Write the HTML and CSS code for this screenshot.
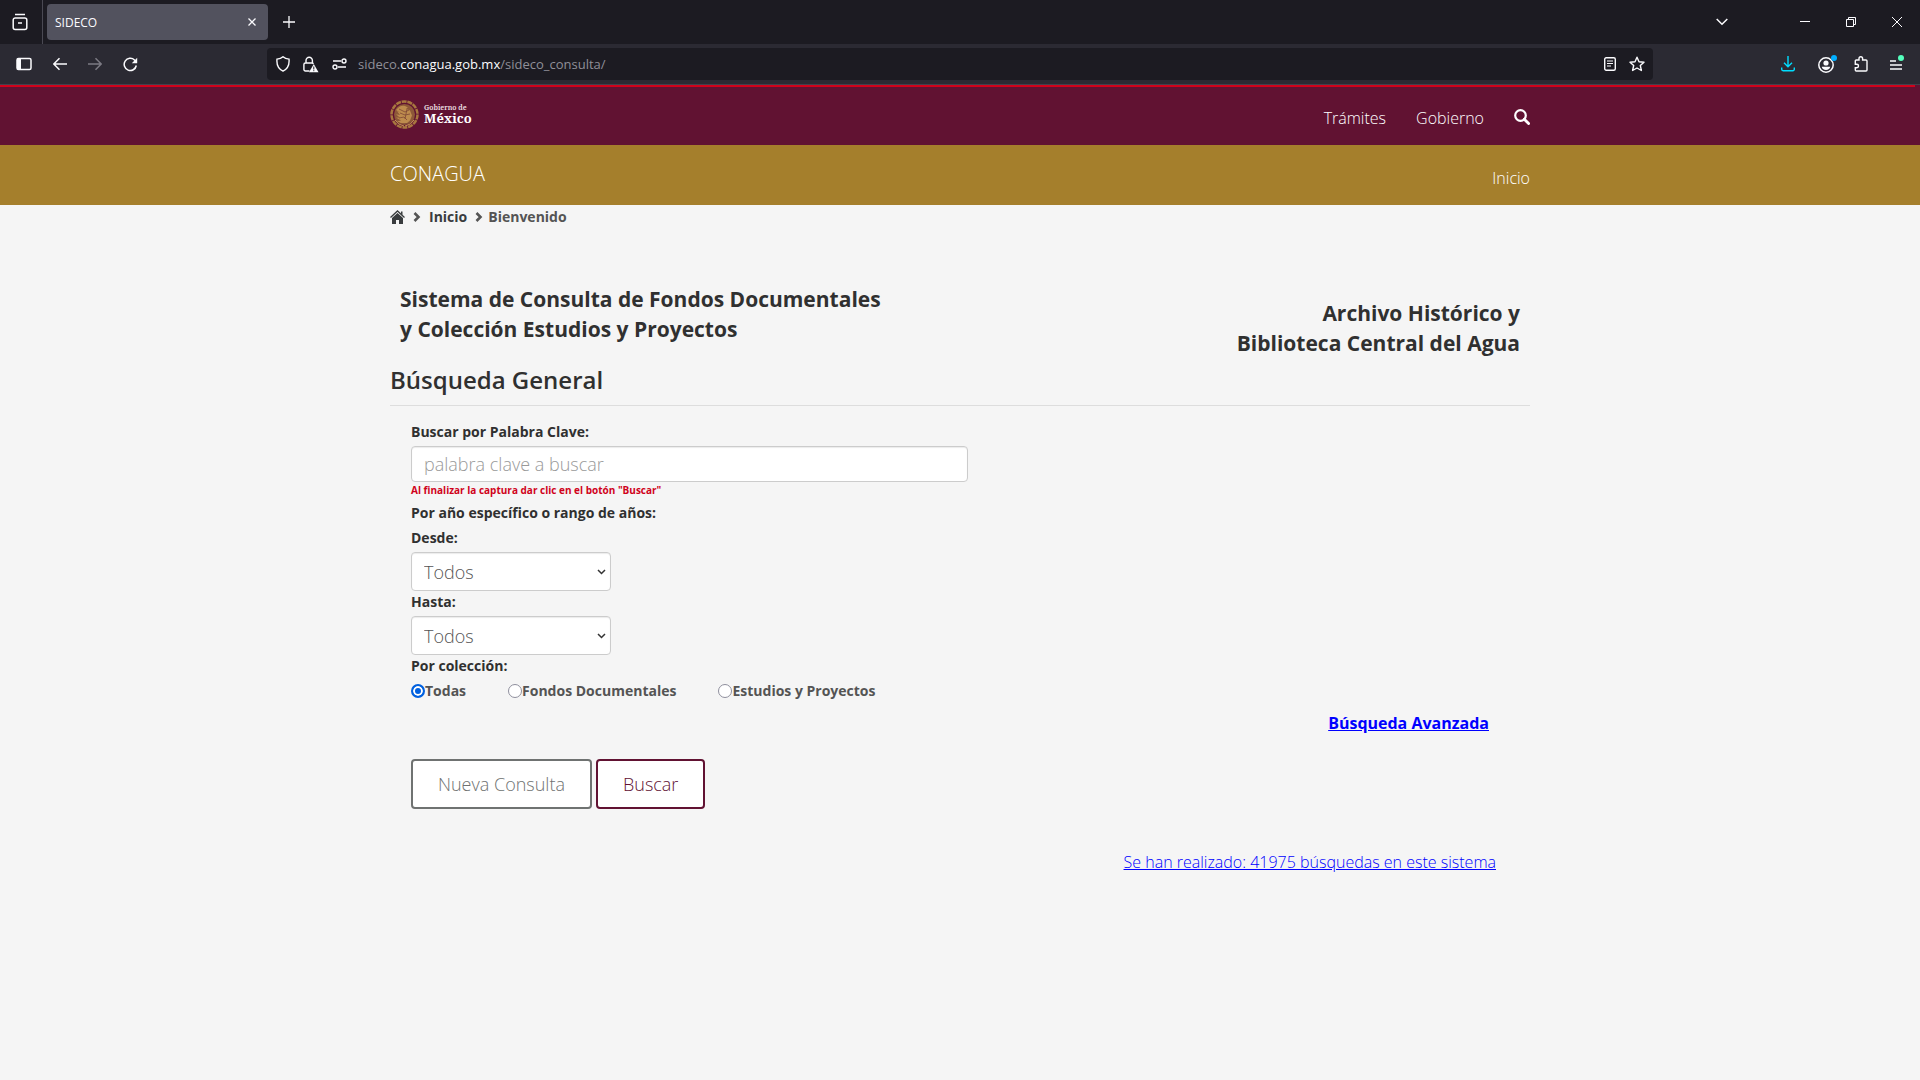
FILE: index.html
```html
<!DOCTYPE html>
<html lang="es">
<head>
<meta charset="utf-8">
<title>SIDECO</title>
<meta name="viewport" content="width=device-width, initial-scale=1">
<link rel="stylesheet" href="styles.css">
</head>
<body>
<div class="browser">
  <div class="tabbar">
    <button class="icon-btn view-btn" aria-label="Firefox View"><svg width="16" height="18" viewBox="0 0 16 18"><path d="M3 1.500h10M3.200 5h9.600a2 2 0 0 1 2 2v7.500a2 2 0 0 1-2 2H3.200a2 2 0 0 1-2-2V7a2 2 0 0 1 2-2zM6 10h4" stroke-width="1.500"/></svg></button>
    <div class="tab"><span>SIDECO</span><button class="icon-btn" aria-label="Cerrar pestaña"><svg width="8" height="8" viewBox="0 0 8 8"><path d="M.5.5l7 7M7.500.5l-7 7" stroke-width="1.300"/></svg></button></div>
    <button class="icon-btn new-tab" aria-label="Nueva pestaña"><svg width="12" height="12" viewBox="0 0 12 12"><path d="M6 0v12M0 6h12" stroke-width="1.300"/></svg></button>
    <div class="window-controls">
      <button class="icon-btn all-tabs" aria-label="Todas las pestañas"><svg width="12" height="8" viewBox="0 0 12 8"><path d="M.7 1L6 6.300 11.300 1" stroke-width="1.500"/></svg></button>
      <button class="icon-btn" aria-label="Minimizar"><svg width="10" height="10" viewBox="0 0 10 10"><path d="M0 4.500h10" stroke-width="1"/></svg></button>
      <button class="icon-btn" aria-label="Restaurar"><svg width="10" height="10" viewBox="0 0 10 10"><path d="M.5 2.500h7v7h-7zM2.500 2.500v-2h7v7h-2" stroke-width="1"/></svg></button>
      <button class="icon-btn" aria-label="Cerrar"><svg width="10" height="10" viewBox="0 0 10 10"><path d="M0 0l10 10M10 0L0 10" stroke-width="1"/></svg></button>
    </div>
  </div>
  <div class="toolbar">
    <div class="nav-buttons">
      <button class="icon-btn" aria-label="Barra lateral"><svg width="16" height="14" viewBox="0 0 16 14"><rect x="1" y="1.500" width="14" height="11" rx="1.500" stroke-width="1.500"/><path d="M1 1.500h4v11H1z" fill="currentColor" stroke="none"/></svg></button>
      <button class="icon-btn" aria-label="Atrás"><svg width="14" height="14" viewBox="0 0 14 14"><path d="M14 7H1M6.500 1.200L.8 7l5.700 5.800" stroke-width="1.500"/></svg></button>
      <button class="icon-btn dim" aria-label="Adelante"><svg width="14" height="14" viewBox="0 0 14 14"><path d="M0 7h13M7.500 1.200L13.200 7l-5.700 5.800" stroke-width="1.500"/></svg></button>
      <button class="icon-btn" aria-label="Recargar"><svg width="15" height="15" viewBox="0 0 15 15"><path d="M13.300 8.500A6.100 6.100 0 1 1 11.500 3L13 4.600" stroke-width="1.500"/><path d="M14.200.8v5.400H8.800z" fill="currentColor" stroke="none"/></svg></button>
    </div>
    <div class="urlbar">
      <svg width="14" height="16" viewBox="0 0 14 16"><path d="M7 .8c1.600 1.500 3.600 2.200 6 2.300.5 5-1.200 9.800-6 12-4.800-2.200-6.500-7-6-12 2.400-.1 4.400-.8 6-2.300z" stroke-width="1.400"/></svg>
      <svg width="16" height="17" viewBox="0 0 16 17"><path d="M3 7V4.500a3.200 3.200 0 0 1 6.400 0V7M6.500 15H2.400a1.500 1.500 0 0 1-1.500-1.500v-5A1.500 1.500 0 0 1 2.400 7H9a2 2 0 0 1 1.500.7" stroke-width="1.400"/><path d="M10.800 8l4.700 8.200H6z" fill="currentColor" stroke="none"/><path d="M10.800 10.500v3M10.800 14.200v1" stroke="#1c1b22"/></svg>
      <svg width="15" height="12" viewBox="0 0 15 12"><path d="M1 3h8M6 9h8" stroke-width="1.400"/><circle cx="12" cy="3" r="2" stroke-width="1.400"/><circle cx="3" cy="9" r="2" stroke-width="1.400"/></svg>
      <div class="url">sideco.<b>conagua.gob.mx</b>/sideco_consulta/</div>
      <button class="icon-btn" aria-label="Vista de lectura"><svg width="12" height="14" viewBox="0 0 12 14"><rect x=".7" y=".7" width="10.600" height="12.600" rx="1.500" stroke-width="1.400"/><path d="M3 4h6M3 6.500h6M3 9h4" stroke-width="1.200"/></svg></button>
      <button class="icon-btn" aria-label="Marcar"><svg width="16" height="16" viewBox="0 0 16 16"><path d="M8 1.200l2 4.500 5 .5-3.700 3.300 1.100 5L8 12l-4.400 2.500 1.100-5L1 6.200l5-.5z" stroke-width="1.400" stroke-linejoin="round"/></svg></button>
    </div>
    <div class="tools">
      <button class="icon-btn blue" aria-label="Descargas"><svg width="14" height="16" viewBox="0 0 14 16"><path d="M7 0v10.500M3 6.800l4 4 4-4M.7 11.500v1.800a1.400 1.400 0 0 0 1.400 1.400h9.800a1.400 1.400 0 0 0 1.400-1.400v-1.800" stroke-width="1.400"/></svg></button>
      <button class="icon-btn" aria-label="Cuenta"><svg width="20" height="20" viewBox="0 0 20 20"><circle cx="9" cy="11" r="7.200" stroke-width="1.500"/><circle cx="9" cy="9" r="2.600" fill="currentColor" stroke="none"/><path d="M4.800 12.800h8.400c0 2-2 3.200-4.200 3.200s-4.200-1.200-4.200-3.200z" fill="currentColor" stroke="none"/><circle cx="17" cy="4" r="3" fill="#00aeff" stroke="none"/></svg></button>
      <button class="icon-btn" aria-label="Extensiones"><svg width="14" height="16" viewBox="0 0 14 16"><path d="M5 4V2.600a1.800 1.800 0 0 1 3.600 0V4H12a1 1 0 0 1 1 1v9a1 1 0 0 1-1 1H2.300a1 1 0 0 1-1-1v-2.300h1.500a1.700 1.700 0 0 0 0-3.400H1.300V5a1 1 0 0 1 1-1z" stroke-width="1.400"/></svg></button>
      <button class="icon-btn" aria-label="Menú"><svg width="16" height="18" viewBox="0 0 16 18"><path d="M0 6h6M0 10h12M0 14h12" stroke-width="1.400"/><circle cx="11" cy="3" r="3" fill="#54ffbd" stroke="none"/></svg></button>
    </div>
  </div>
</div>

<header class="gov-bar">
  <div class="progress"></div>
  <div class="container bar-row">
    <a class="logo" href="#" aria-label="Gobierno de México">
      <svg width="29" height="29" viewBox="0 0 29 29">
        <circle cx="14.500" cy="14.500" r="13" fill="none" stroke="#a8773f" stroke-width="2.500" stroke-dasharray="5 .8"/>
        <circle cx="14.500" cy="14.500" r="10.500" fill="#8d5838"/>
        <path d="M6 10c3-4 6-5 9-4l3 1.500-2 1 4 2 2 5-2 5-3 2.500-5 .5-5-2 4-1-5-3 4 .2-4-3.500 4 .8-3-4 4 2z" fill="#bd8b4d"/>
        <path d="M9 9l6 3 4-2M10 13l5 2 5-1M9 18l5-1 3 3M17 9l-2 10M7 22q7 4 15 0" fill="none" stroke="#7d4635" stroke-width=".8"/>
        <path d="M5 20q3 5 9 6M24 20q-3 5-9 6" fill="none" stroke="#c49457" stroke-width="1"/>
      </svg>
      <span class="wordmark"><span class="small">Gobierno de</span><span class="large">México</span></span>
    </a>
    <nav class="gov-nav">
      <a href="#">Trámites</a>
      <a href="#">Gobierno</a>
      <a href="#" aria-label="Buscar"><svg width="16" height="16" viewBox="0 0 16 16"><circle cx="6.500" cy="6.500" r="5.300" stroke="#fff" stroke-width="2.200"/><path d="M10.300 10.300l4.300 4.300" stroke="#fff" stroke-width="2.800" stroke-linecap="round"/></svg></a>
    </nav>
  </div>
</header>
<div class="sub-bar">
  <div class="container bar-row">
    <a class="brand" href="#">CONAGUA</a>
    <a class="home-link" href="#">Inicio</a>
  </div>
</div>

<main class="container">
  <nav class="breadcrumb" aria-label="Ruta">
    <a href="#" aria-label="Inicio"><svg width="15" height="15" viewBox="0 0 15 15"><path d="M.5 7.500l7-6.500 7 6.500" stroke="currentColor" stroke-width="1.300"/><path d="M7.500 3l5.500 5v6H9v-4H6v4H2V8z" fill="currentColor" stroke="none"/><path d="M11 1.500h1.500V5L11 3.700z" fill="currentColor" stroke="none"/></svg></a>
    <svg class="sep" width="8" height="10" viewBox="0 0 8 10"><path d="M1.500 1l4 4-4 4" stroke-width="2.600"/></svg>
    <a href="#">Inicio</a>
    <svg class="sep" width="8" height="10" viewBox="0 0 8 10"><path d="M1.500 1l4 4-4 4" stroke-width="2.600"/></svg>
    <span>Bienvenido</span>
  </nav>

  <div class="titles">
    <h1>Sistema de Consulta de Fondos Documentales<br>y Colección Estudios y Proyectos</h1>
    <p class="archive">Archivo Histórico y<br>Biblioteca Central del Agua</p>
  </div>
  <h2>Búsqueda General</h2>

  <form class="search">
    <label for="keyword">Buscar por Palabra Clave:</label>
    <input class="field keyword" id="keyword" type="text" placeholder="palabra clave a buscar">
    <small class="hint">Al finalizar la captura dar clic en el botón "Buscar"</small>
    <p class="caption">Por año específico o rango de años:</p>
    <label class="spaced" for="from">Desde:</label>
    <div class="select"><select class="field" id="from"><option>Todos</option></select><svg width="9" height="6" viewBox="0 0 9 6"><path d="M1 1l3.500 3.500L8 1" stroke-width="1.500"/></svg></div>
    <label for="to">Hasta:</label>
    <div class="select"><select class="field" id="to"><option>Todos</option></select><svg width="9" height="6" viewBox="0 0 9 6"><path d="M1 1l3.500 3.500L8 1" stroke-width="1.500"/></svg></div>
    <fieldset>
      <legend>Por colección:</legend>
      <div class="radios">
        <label><input type="radio" name="collection" checked>Todas</label>
        <label><input type="radio" name="collection">Fondos Documentales</label>
        <label><input type="radio" name="collection">Estudios y Proyectos</label>
      </div>
    </fieldset>
    <a class="advanced" href="#">Búsqueda Avanzada</a>
    <div class="actions">
      <button class="btn" type="reset">Nueva Consulta</button>
      <button class="btn primary" type="button">Buscar</button>
    </div>
  </form>
  <p class="counter"><a href="#">Se han realizado: 41975 búsquedas en este sistema</a></p>
</main>
</body>
</html>
```
FILE: styles.css
```css
* { box-sizing: border-box; }
body {
  margin: 0;
  background: #f5f5f5;
  color: #303030;
  font-family: "Open Sans", "Noto Sans", sans-serif;
  font-size: 16px;
  font-weight: 300;
}
a { color: inherit; text-decoration: none; }
svg { display: block; flex: none; fill: none; }
h1, h2, p { margin: 0; }

/* Browser window */
.browser { color: #fbfbfe; font-size: 12px; font-weight: 400; border-bottom: 1px solid #42414d; }
.browser svg { stroke: currentColor; }
.icon-btn { display: flex; padding: 0; border: 0; background: none; color: inherit; }
.tabbar { display: flex; align-items: center; height: 44px; background: #1c1b22; }
.view-btn { align-self: stretch; align-items: center; width: 43px; padding-left: 12px; border-right: 1px solid #4a4953; }
.tab {
  display: flex; align-items: center; justify-content: space-between;
  width: 221px; height: 36px; margin-left: 4px; padding: 0 12px 0 8px;
  border-radius: 4px; background: #52525e;
}
.new-tab { margin-left: 15px; }
.window-controls { display: flex; align-items: center; gap: 36px; margin-left: auto; padding-right: 18px; }
.all-tabs { margin-right: 36px; }
.toolbar { display: flex; align-items: center; height: 40px; background: #2b2a33; }
.nav-buttons { display: flex; align-items: center; gap: 21px; width: 267px; padding-left: 16px; }
.dim { color: #7c7b84; }
.blue { color: #00ddff; }
.urlbar {
  display: flex; align-items: center; flex: 1; gap: 13px;
  height: 32px; padding: 0 8px 0 9px; border-radius: 4px; background: #1c1b22;
}
.url { flex: 1; margin-left: -2px; font-size: 13px; color: #8f8f98; }
.url b { color: #fbfbfe; font-weight: 400; }
.tools { display: flex; align-items: center; justify-content: space-between; width: 267px; padding: 0 14px 0 128px; }
.tools .icon-btn { width: 16px; height: 20px; align-items: center; }

/* Site header */
.container { width: 100%; max-width: 1170px; margin: 0 auto; padding: 0 15px; }
.bar-row { display: flex; justify-content: space-between; }
.gov-bar { height: 60px; background: #611232; color: #fff; }
.progress { height: 2px; margin-right: 5px; background: #d0021b; }
.logo { display: flex; align-items: center; gap: 5px; height: 54px; }
.wordmark { display: flex; flex-direction: column; font-family: "Noto Serif", "Liberation Serif", serif; }
.small { font-size: 7px; line-height: 9px; font-weight: 600; color: #f0e0e6; }
.large { font-size: 13px; line-height: 13px; font-weight: 700; }
.gov-nav { display: flex; align-items: center; gap: 30px; height: 62px; }
.gov-nav svg { margin-bottom: 2px; }
.sub-bar { height: 60px; background: #a57f2c; color: #fff; }
.brand { font-size: 20px; line-height: 58px; }
.home-link { line-height: 66px; }

/* Page content */
.breadcrumb {
  display: flex; align-items: center; height: 24px;
  font-size: 14px; line-height: 22px; font-weight: 700; color: #545454;
}
.breadcrumb a { color: #393c3e; }
.breadcrumb .sep { margin: 0 8px; stroke: #545454; }
.breadcrumb .sep + span { margin-left: -3px; }
.titles {
  display: flex; justify-content: space-between;
  padding: 55px 10px 0; font-size: 21px; line-height: 30px; font-weight: 700;
}
h1 { font-size: 21px; font-weight: 700; }
.archive { padding-top: 14px; text-align: right; }
h2 {
  padding: 9px 0 12px; border-bottom: 1px solid #dddddd;
  font-size: 24px; line-height: 26px; font-weight: 600;
}
.search { display: flex; flex-direction: column; align-items: flex-start; padding: 15px 41px 0 21px; }
.search label, .caption, legend {
  padding: 0; margin: 1px 0 4px; font-size: 14px; line-height: 20px; font-weight: 700;
}
.search .caption, .search .spaced { margin-top: 5px; }
.search .caption { margin-bottom: 0; }
.field {
  display: block; width: 100%; padding: 0 12px;
  border: 1px solid #ccc; border-radius: 4px; background: #fff;
  box-shadow: inset 0 1px 1px rgba(0, 0, 0, .08);
  color: #545454; font: inherit; font-size: 18px; appearance: none;
}
.keyword { max-width: 557px; height: 36px; }
.keyword::placeholder { color: #999; opacity: 1; }
.hint { color: #d0021b; font-size: 10px; line-height: 16px; font-weight: 700; }
.select { display: grid; align-items: center; width: 200px; }
.select > * { grid-area: 1 / 1; }
.select .field { height: 39px; }
.select svg { justify-self: end; margin-right: 5px; stroke: #333; pointer-events: none; }
fieldset { margin: 1px 0 0; padding: 0; border: 0; min-width: 0; }
.radios { display: flex; gap: 42px; padding-top: 1px; }
.search .radios label { display: flex; align-items: center; margin: 0; color: #545454; }
.radios input {
  appearance: none; width: 14px; height: 14px; margin: 0;
  border: 1px solid #8f8f9d; border-radius: 50%; background: #fff;
}
.radios input:checked { border: 2px solid #0060df; background: #0060df; box-shadow: inset 0 0 0 2px #fff; }
.advanced {
  align-self: flex-end; margin-top: 10px; line-height: 24px;
  font-weight: 700; color: #00f; text-decoration: underline;
}
.actions { display: flex; gap: 4px; margin-top: 24px; }
.btn {
  height: 50px; padding: 0 25px; border: 2px solid #6f7271; border-radius: 4px;
  background: #fff; color: #6f7271; font: inherit; font-size: 18px;
}
.primary { border-color: #611232; color: #611232; }
.counter { padding: 41px 34px 0 0; line-height: 24px; text-align: right; }
.counter a { color: #00f; text-decoration: underline; }
```
